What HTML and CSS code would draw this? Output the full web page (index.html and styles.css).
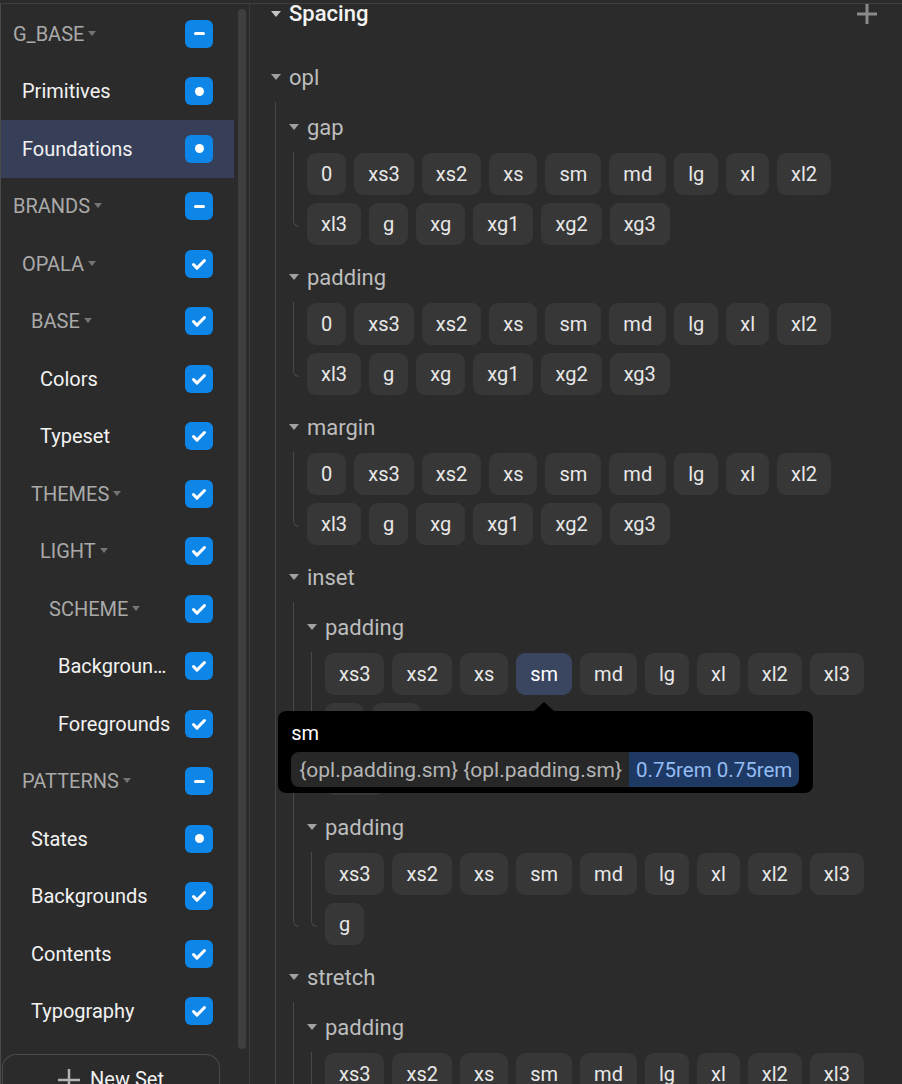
FILE: index.html
```html
<!DOCTYPE html>
<html lang="en">
<head>
    <meta charset="UTF-8">
    <meta name="viewport" content="width=device-width, initial-scale=1.0">
    <title>Token Sets - Spacing</title>
    <link rel="stylesheet" href="styles.css">
</head>
<body>
    <div class="app">
        <aside class="sidebar">
            <div class="sidebar-top">
                <ul class="set-list">
                    <li class="set-row group lvl-0"><span class="set-name">G_BASE<i class="set-caret"></i></span><span class="cb minus"></span></li>
                    <li class="set-row lvl-1"><span class="set-name">Primitives</span><span class="cb dot"></span></li>
                    <li class="set-row lvl-1 active"><span class="set-name">Foundations</span><span class="cb dot"></span></li>
                    <li class="set-row group lvl-0"><span class="set-name">BRANDS<i class="set-caret"></i></span><span class="cb minus"></span></li>
                    <li class="set-row group lvl-1"><span class="set-name">OPALA<i class="set-caret"></i></span><span class="cb"><svg viewBox="0 0 28 28"><path d="M8.5 14.5l3.5 3.6 7.5-7.6"/></svg></span></li>
                    <li class="set-row group lvl-2"><span class="set-name">BASE<i class="set-caret"></i></span><span class="cb"><svg viewBox="0 0 28 28"><path d="M8.5 14.5l3.5 3.6 7.5-7.6"/></svg></span></li>
                    <li class="set-row lvl-3"><span class="set-name">Colors</span><span class="cb"><svg viewBox="0 0 28 28"><path d="M8.5 14.5l3.5 3.6 7.5-7.6"/></svg></span></li>
                    <li class="set-row lvl-3"><span class="set-name">Typeset</span><span class="cb"><svg viewBox="0 0 28 28"><path d="M8.5 14.5l3.5 3.6 7.5-7.6"/></svg></span></li>
                    <li class="set-row group lvl-2"><span class="set-name">THEMES<i class="set-caret"></i></span><span class="cb"><svg viewBox="0 0 28 28"><path d="M8.5 14.5l3.5 3.6 7.5-7.6"/></svg></span></li>
                    <li class="set-row group lvl-3"><span class="set-name">LIGHT<i class="set-caret"></i></span><span class="cb"><svg viewBox="0 0 28 28"><path d="M8.5 14.5l3.5 3.6 7.5-7.6"/></svg></span></li>
                    <li class="set-row group lvl-4"><span class="set-name">SCHEME<i class="set-caret"></i></span><span class="cb"><svg viewBox="0 0 28 28"><path d="M8.5 14.5l3.5 3.6 7.5-7.6"/></svg></span></li>
                    <li class="set-row lvl-5"><span class="set-name">Backgrounds</span><span class="cb"><svg viewBox="0 0 28 28"><path d="M8.5 14.5l3.5 3.6 7.5-7.6"/></svg></span></li>
                    <li class="set-row lvl-5"><span class="set-name">Foregrounds</span><span class="cb"><svg viewBox="0 0 28 28"><path d="M8.5 14.5l3.5 3.6 7.5-7.6"/></svg></span></li>
                    <li class="set-row group lvl-1"><span class="set-name">PATTERNS<i class="set-caret"></i></span><span class="cb minus"></span></li>
                    <li class="set-row lvl-2"><span class="set-name">States</span><span class="cb dot"></span></li>
                    <li class="set-row lvl-2"><span class="set-name">Backgrounds</span><span class="cb"><svg viewBox="0 0 28 28"><path d="M8.5 14.5l3.5 3.6 7.5-7.6"/></svg></span></li>
                    <li class="set-row lvl-2"><span class="set-name">Contents</span><span class="cb"><svg viewBox="0 0 28 28"><path d="M8.5 14.5l3.5 3.6 7.5-7.6"/></svg></span></li>
                    <li class="set-row lvl-2"><span class="set-name">Typography</span><span class="cb"><svg viewBox="0 0 28 28"><path d="M8.5 14.5l3.5 3.6 7.5-7.6"/></svg></span></li>
                </ul>
                <div class="scroll-track"></div>
            </div>
            <button class="new-set">
                <svg class="plus" viewBox="0 0 22 22"><path d="M11 0v22M0 11h22"/></svg>
                New Set
            </button>
        </aside>

        <main class="tokens">
            <div class="root-head">
                <span class="caret light"></span>Spacing
                <svg class="add" viewBox="0 0 20 20"><path d="M10 0v20M0 10h20"/></svg>
            </div>

            <div class="root-body">
                <div class="node">
                    <div class="node-head"><span class="caret"></span>opl</div>
                    <div class="node-body">
                        <div class="guide"></div>
                        <div class="node-items">

                            <div class="node">
                                <div class="node-head"><span class="caret"></span>gap</div>
                                <div class="node-body">
                                    <div class="guide"></div>
                                    <div class="tags">
                                        <span class="tag">0</span><span class="tag">xs3</span><span class="tag">xs2</span><span class="tag">xs</span><span class="tag">sm</span><span class="tag">md</span><span class="tag">lg</span><span class="tag">xl</span><span class="tag">xl2</span>
                                        <span class="tag">xl3</span><span class="tag">g</span><span class="tag">xg</span><span class="tag">xg1</span><span class="tag">xg2</span><span class="tag">xg3</span>
                                    </div>
                                </div>
                            </div>

                            <div class="node">
                                <div class="node-head"><span class="caret"></span>padding</div>
                                <div class="node-body">
                                    <div class="guide"></div>
                                    <div class="tags">
                                        <span class="tag">0</span><span class="tag">xs3</span><span class="tag">xs2</span><span class="tag">xs</span><span class="tag">sm</span><span class="tag">md</span><span class="tag">lg</span><span class="tag">xl</span><span class="tag">xl2</span>
                                        <span class="tag">xl3</span><span class="tag">g</span><span class="tag">xg</span><span class="tag">xg1</span><span class="tag">xg2</span><span class="tag">xg3</span>
                                    </div>
                                </div>
                            </div>

                            <div class="node">
                                <div class="node-head"><span class="caret"></span>margin</div>
                                <div class="node-body">
                                    <div class="guide"></div>
                                    <div class="tags">
                                        <span class="tag">0</span><span class="tag">xs3</span><span class="tag">xs2</span><span class="tag">xs</span><span class="tag">sm</span><span class="tag">md</span><span class="tag">lg</span><span class="tag">xl</span><span class="tag">xl2</span>
                                        <span class="tag">xl3</span><span class="tag">g</span><span class="tag">xg</span><span class="tag">xg1</span><span class="tag">xg2</span><span class="tag">xg3</span>
                                    </div>
                                </div>
                            </div>

                            <div class="node">
                                <div class="node-head"><span class="caret"></span>inset</div>
                                <div class="node-body">
                                    <div class="guide"></div>
                                    <div class="node-items">
                                        <div class="node">
                                            <div class="node-head"><span class="caret"></span>padding</div>
                                            <div class="node-body">
                                                <div class="guide"></div>
                                                <div class="tags">
                                                    <span class="tag">xs3</span><span class="tag">xs2</span><span class="tag">xs</span>
                                                    <span class="tag active">sm
                                                        <span class="tooltip">
                                                            <span class="tip-title">sm</span>
                                                            <span class="tip-value"><span class="tip-ref">{opl.padding.sm} {opl.padding.sm}</span><span class="tip-resolved">0.75rem 0.75rem</span></span>
                                                        </span>
                                                    </span>
                                                    <span class="tag">md</span><span class="tag">lg</span><span class="tag">xl</span><span class="tag">xl2</span><span class="tag">xl3</span>
                                                    <span class="tag">g</span><span class="tag">xg</span><span class="tag-break"></span>
                                                    <span class="tag">xg1</span>
                                                </div>
                                            </div>
                                        </div>
                                        <div class="node">
                                            <div class="node-head"><span class="caret"></span>padding</div>
                                            <div class="node-body">
                                                <div class="guide"></div>
                                                <div class="tags">
                                                    <span class="tag">xs3</span><span class="tag">xs2</span><span class="tag">xs</span><span class="tag">sm</span><span class="tag">md</span><span class="tag">lg</span><span class="tag">xl</span><span class="tag">xl2</span><span class="tag">xl3</span>
                                                    <span class="tag">g</span>
                                                </div>
                                            </div>
                                        </div>
                                    </div>
                                </div>
                            </div>

                            <div class="node">
                                <div class="node-head"><span class="caret"></span>stretch</div>
                                <div class="node-body">
                                    <div class="guide"></div>
                                    <div class="node-items">
                                        <div class="node">
                                            <div class="node-head"><span class="caret"></span>padding</div>
                                            <div class="node-body">
                                                <div class="guide"></div>
                                                <div class="tags">
                                                    <span class="tag">xs3</span><span class="tag">xs2</span><span class="tag">xs</span><span class="tag">sm</span><span class="tag">md</span><span class="tag">lg</span><span class="tag">xl</span><span class="tag">xl2</span><span class="tag">xl3</span>
                                                    <span class="tag">g</span>
                                                </div>
                                            </div>
                                        </div>
                                    </div>
                                </div>
                            </div>

                        </div>
                    </div>
                </div>
            </div>
        </main>
    </div>
</body>
</html>
```

FILE: styles.css
```css
* {
    box-sizing: border-box;
}

body {
    margin: 0;
    height: 100vh;
    overflow: hidden;
    background-color: #2b2b2b;
    font-family: Roboto, "Liberation Sans", sans-serif;
    color: #ececec;
}

.app {
    display: flex;
    height: calc(100vh - 3px);
    margin-top: 3px;
    border-top: 1px solid #3d3d3d;
    border-left: 1px solid #4b4b4b;
}

/* ---- left column: token sets ---- */

.sidebar {
    width: 249px;
    flex: none;
    border-right: 1px solid #3c3c3c;
    display: flex;
    flex-direction: column;
    overflow: hidden;
}

.sidebar-top {
    height: 1045px;
    flex: none;
    display: flex;
}

.set-list {
    list-style: none;
    margin: 0;
    padding: 1px 0 0;
    width: 233px;
    flex: none;
}

.set-row {
    height: 57.5px;
    display: flex;
    align-items: center;
    padding-right: 21px;
    font-size: 20px;
    color: #f2f2f2;
}

.set-row.active {
    background-color: #373e58;
}

.set-row.group {
    color: #a9a9a9;
}

.lvl-0 { padding-left: 12px; }
.lvl-1 { padding-left: 21px; }
.lvl-2 { padding-left: 30px; }
.lvl-3 { padding-left: 39px; }
.lvl-4 { padding-left: 48px; }
.lvl-5 { padding-left: 57px; }

.set-name {
    flex: 1;
    min-width: 0;
    white-space: nowrap;
    overflow: hidden;
    text-overflow: ellipsis;
}

.set-caret {
    display: inline-block;
    margin-left: 4px;
    vertical-align: 5px;
    border-left: 4.5px solid transparent;
    border-right: 4.5px solid transparent;
    border-top: 5px solid #747474;
}

.cb {
    width: 28px;
    height: 28px;
    flex: none;
    margin-left: 11px;
    border-radius: 6px;
    background-color: #0e86e8;
    display: flex;
    align-items: center;
    justify-content: center;
}

.cb svg {
    width: 28px;
    height: 28px;
    fill: none;
    stroke: #fff;
    stroke-width: 3;
    stroke-linecap: round;
    stroke-linejoin: round;
}

.cb.minus::after {
    content: "";
    width: 11px;
    height: 3px;
    border-radius: 2px;
    background: #fff;
}

.cb.dot::after {
    content: "";
    width: 9px;
    height: 9px;
    border-radius: 50%;
    background: #fff;
}

.scroll-track {
    width: 8px;
    margin: 5px 0 0 4px;
    border-radius: 4px;
    background-color: #3f3f3f;
}

.new-set {
    flex: none;
    height: 60px;
    width: 218px;
    margin: 5px 0 0 1px;
    padding: 12px 0 0;
    border: 1px solid #4a4a4a;
    border-bottom: none;
    border-radius: 14px 14px 0 0;
    background: transparent;
    color: #f2f2f2;
    font-family: inherit;
    font-size: 20px;
    line-height: 24px;
    display: flex;
    justify-content: center;
    align-items: flex-start;
    gap: 10px;
}

.new-set .plus {
    width: 22px;
    height: 22px;
    margin-top: 2px;
    stroke: #b3b3b3;
    stroke-width: 2.5;
}

/* ---- right column: token tree ---- */

.tokens {
    flex: 1;
    min-width: 0;
    padding: 0 22px 0 21px;
    overflow: hidden;
}

.caret {
    width: 0;
    height: 0;
    flex: none;
    margin-right: 8px;
    border-left: 5px solid transparent;
    border-right: 5px solid transparent;
    border-top: 6px solid #a0a0a0;
}

.caret.light {
    border-top-color: #c4c4c4;
}

.root-head {
    height: 20px;
    line-height: 20px;
    display: flex;
    align-items: center;
    font-size: 22px;
    font-weight: 500;
    color: #f4f4f4;
}

.root-head .add {
    width: 20px;
    height: 20px;
    margin-left: auto;
    margin-right: 3px;
    stroke: #8a8a8a;
    stroke-width: 3;
}

.root-body {
    padding-top: 35px;
}

.node + .node {
    margin-top: 14px;
}

.node-head {
    height: 36px;
    display: flex;
    align-items: center;
    font-size: 22px;
    color: #bdbdbd;
}

.node-body {
    display: flex;
    margin: 7px 0 0 4px;
}

.node-head + .node-body .tags {
    margin-top: 1px;
}

.guide {
    width: 6px;
    flex: none;
    margin-bottom: 18px;
    border-left: 1px solid #474747;
    border-bottom: 1px solid #474747;
    border-bottom-left-radius: 6px;
}

.node-items {
    flex: 1;
    min-width: 0;
    margin-left: 8px;
}

.node-items > .node:first-child {
    margin-top: 7px;
}

.tags {
    flex: 1;
    min-width: 0;
    margin-left: 8px;
    margin-bottom: -8px;
    display: flex;
    flex-wrap: wrap;
}

.tag {
    height: 42px;
    margin: 0 8px 8px 0;
    padding: 0 14px;
    border-radius: 9px;
    background-color: #373737;
    color: #e8e8e8;
    font-size: 20px;
    display: flex;
    align-items: center;
    white-space: nowrap;
}

.tag-break {
    flex-basis: 100%;
    height: 0;
}

.tag.active {
    position: relative;
    background-color: #3a4560;
    color: #fff;
}

.tooltip {
    position: absolute;
    z-index: 5;
    top: 58px;
    left: -238px;
    width: max-content;
    padding: 8px 14px 6px 13px;
    border-radius: 8px;
    background-color: #000;
    display: flex;
    flex-direction: column;
    gap: 5px;
}

.tooltip::before {
    content: "";
    position: absolute;
    top: -9px;
    left: 256px;
    border-left: 10px solid transparent;
    border-right: 10px solid transparent;
    border-bottom: 9px solid #000;
}

.tip-title {
    line-height: 28px;
    font-size: 20px;
    color: #fff;
}

.tip-value {
    display: flex;
    height: 35px;
    border-radius: 8px;
    overflow: hidden;
}

.tip-ref {
    display: flex;
    align-items: center;
    padding: 0 7px 0 8px;
    background-color: #272727;
    color: #b4b4b4;
    font-size: 21px;
}

.tip-resolved {
    display: flex;
    align-items: center;
    padding: 0 7px;
    background-color: #1e3a64;
    color: #94bcf4;
    font-size: 20.5px;
}
```
